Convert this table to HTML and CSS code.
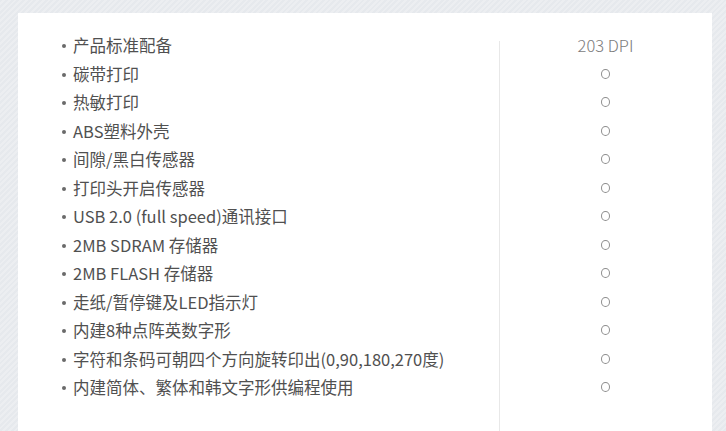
FILE: index.html
```html
<!DOCTYPE html>
<html lang="zh-CN">

<head>
    <meta charset="UTF-8">
    <meta name="viewport" content="width=device-width, initial-scale=1.0">
    <title>产品规格</title>
    <link rel="stylesheet" href="styles.css">
</head>

<body>
    <div class="spec-box">
        <ul class="spec-list">
            <li>产品标准配备</li>
            <li>碳带打印</li>
            <li>热敏打印</li>
            <li>ABS塑料外壳</li>
            <li>间隙/黑白传感器</li>
            <li>打印头开启传感器</li>
            <li>USB 2.0 (full speed)通讯接口</li>
            <li>2MB SDRAM 存储器</li>
            <li>2MB FLASH 存储器</li>
            <li>走纸/暂停键及LED指示灯</li>
            <li>内建8种点阵英数字形</li>
            <li>字符和条码可朝四个方向旋转印出(0,90,180,270度)</li>
            <li>内建简体、繁体和韩文字形供编程使用</li>
        </ul>
        <ul class="spec-value">
            <li>203 DPI</li>
            <li><span class="circle"></span></li>
            <li><span class="circle"></span></li>
            <li><span class="circle"></span></li>
            <li><span class="circle"></span></li>
            <li><span class="circle"></span></li>
            <li><span class="circle"></span></li>
            <li><span class="circle"></span></li>
            <li><span class="circle"></span></li>
            <li><span class="circle"></span></li>
            <li><span class="circle"></span></li>
            <li><span class="circle"></span></li>
            <li><span class="circle"></span></li>
        </ul>
    </div>
</body>

</html>
```

FILE: styles.css
```css
* {
    margin: 0;
    padding: 0;
}

html,
body {
    height: 100%;
    overflow: hidden;
}

body {
    background: repeating-linear-gradient(135deg, #e6e9ed 0, #e6e9ed 2px, #eceef1 2px, #eceef1 4px);
    font-family: "Noto Sans CJK SC", "Noto Sans", sans-serif;
    font-size: 16.5px;
    padding-top: 13px;
}

ul {
    list-style: none;
}

.spec-box {
    display: grid;
    grid-template-columns: 481px 1fr;
    margin: 0 14px 0 18px;
    height: 100%;
    background: #fff;
}

.spec-list {
    padding: 18px 0 0 44px;
    color: #505050;
}

.spec-list li {
    line-height: 28.5px;
    white-space: nowrap;
}

.spec-list li::before {
    content: "";
    display: inline-block;
    width: 4px;
    height: 4px;
    margin-right: 7px;
    border-radius: 50%;
    background: #6a6a6a;
    vertical-align: 4px;
}

.spec-value {
    padding-top: 18px;
    text-align: center;
    color: #7c7c7c;
    font-weight: 300;
    background: linear-gradient(#e8e8e8, #e8e8e8) left 28px / 1px 100% no-repeat;
}

.spec-value li {
    line-height: 28.5px;
}

.circle {
    display: inline-block;
    width: 7px;
    height: 8px;
    border: 1px solid #8e8e8e;
    border-radius: 50%;
    vertical-align: 2px;
}
```
